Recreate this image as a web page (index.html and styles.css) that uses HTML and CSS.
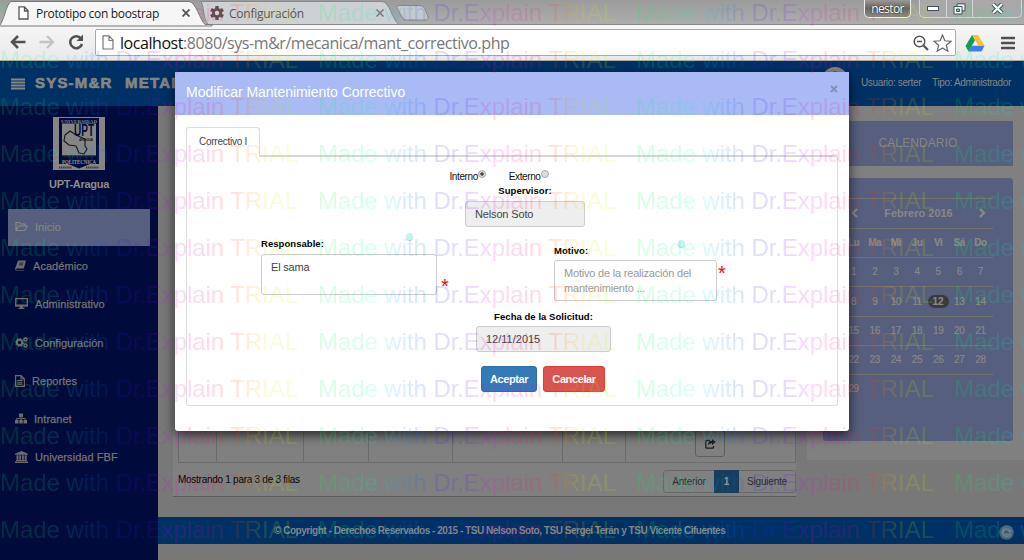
FILE: index.html
```html
<!DOCTYPE html>
<html lang="es">
<head>
<meta charset="utf-8">
<title>Prototipo con boostrap</title>
<link rel="stylesheet" href="styles.css">
</head>
<body>
<div class="screen">
  <header class="chrome">
    <div class="tabstrip">
      <div class="tab tab-active">
        <svg class="tab-shape" width="212" height="26"><path d="M-1 26C4 22 6 4 11 1.500H189C196 2 200 20 205 24.500H212V26Z" fill="#f6f6f6" stroke="#777"/></svg>
        <svg class="tab-icon" width="11" height="14"><path d="M1 .8h5.500L10 4.500V13H1zM6.500 1v4H10" fill="#fff" stroke="#555" stroke-width="1.300"/></svg>
        <span class="tab-title t1">Prototipo con boostrap</span>
        <svg class="tab-close" width="8" height="8"><path d="M.5.5l7 7M7.500.5l-7 7" stroke="#555" stroke-width="1.800"/></svg>
      </div>
      <div class="tab tab-back">
        <svg class="tab-shape" width="200" height="25"><path d="M0 1.500H181C189 2 191 20 198 24.500H7C2 18 3 5 0 1.500Z" fill="#cdd0d4" stroke="#888"/></svg>
        <svg class="tab-icon" width="14" height="14" viewBox="-7 -7 14 14"><g fill="#5a5252"><circle r="5"/><path d="M-1.700-7h3.400v14h-3.400z"/><path d="M-1.700-7h3.400v14h-3.400z" transform="rotate(60)"/><path d="M-1.700-7h3.400v14h-3.400z" transform="rotate(120)"/></g><circle r="2.200" fill="#d4d4d6"/></svg>
        <span class="tab-title t2">Configuración</span>
        <svg class="tab-close" width="8" height="8"><path d="M.5.5l7 7M7.500.5l-7 7" stroke="#777" stroke-width="1.500"/></svg>
      </div>
      <svg class="tab-new" width="34" height="16"><path d="M3 .5H23Q28 .5 29 4L32 12Q33 15 29 15H10Q7 15 6 12L1 3Q0 .5 3 .5Z" fill="#c5c7cb" stroke="#888"/></svg>
      <div class="win">
        <span class="win-user">nestor</span>
        <span class="win-buttons">
          <i><svg width="12" height="6"><rect x=".5" y=".5" width="11" height="4" fill="#fff" stroke="#444b60"/></svg></i>
          <i><svg width="13" height="12"><path d="M4 .8h8v7H4z" fill="#eee" stroke="#444b60"/><path d="M1 3.500h8v7.500H1z" fill="#fff" stroke="#444b60"/><path d="M3.500 6h3v2.500h-3z" fill="#aaa" stroke="#444b60"/></svg></i>
          <i class="wide"><svg width="13" height="11"><path d="M2 1l9 9M11 1L2 10" stroke="#444b60" stroke-width="4.200"/><path d="M2 1l9 9M11 1L2 10" stroke="#fff" stroke-width="2.200"/></svg></i>
        </span>
      </div>
    </div>
    <div class="toolbar">
      <svg class="nav" width="16" height="14"><path d="M8 1L2 7l6 6M2 7h13.500" fill="none" stroke="#505050" stroke-width="2.500"/></svg>
      <svg class="nav nav2" width="16" height="14"><path d="M8 1l6 6-6 6M14 7H.5" fill="none" stroke="#c4c4c4" stroke-width="2.300"/></svg>
      <svg class="nav nav3" width="16" height="16"><path d="M13 4.500A6 6 0 1 0 14 10" fill="none" stroke="#505050" stroke-width="2.500"/><path d="M15 .5V7H8.500z" fill="#505050"/></svg>
      <div class="omni">
        <svg width="12" height="15"><path d="M1 .8h6L11 5v9H1zM7 1v4.500h4" fill="#fff" stroke="#777" stroke-width="1.200"/></svg>
        <span class="url"><b>localhost</b>:8080/sys-m&amp;r/mecanica/mant_correctivo.php</span>
        <svg width="16" height="16"><circle cx="6.500" cy="6.500" r="5.300" fill="none" stroke="#555" stroke-width="1.500"/><path d="M4 6.500h5" stroke="#555" stroke-width="1.500"/><path d="M10.500 10.500L15 15" stroke="#555" stroke-width="2.300"/></svg>
        <svg class="star" width="19" height="18"><path d="M9.500 1l2.400 5.800 6.100.4-4.700 4 1.500 6L9.500 14l-5.300 3.200 1.500-6-4.700-4 6.100-.4z" fill="#fff" stroke="#666" stroke-width="1.200"/></svg>
      </div>
      <svg class="drive" width="20" height="18"><path d="M7 1h6l6.500 10.500h-6z" fill="#fbc02e"/><path d="M7 1l3 5.300L3.500 17.500 .5 12z" fill="#149c56"/><path d="M6.700 11.700h12.800L16.500 17.500H3.500z" fill="#3f7ee8"/></svg>
      <svg class="menu" width="14" height="14"><path d="M1 2h12M1 7h12M1 12h12" stroke="#505050" stroke-width="2.600" stroke-linecap="round"/></svg>
    </div>
  </header>

  <div class="app">
    <div class="topbar">
      <svg width="14" height="12"><path d="M0 1.500h14M0 4.500h14M0 7.500h14M0 10.500h14" stroke="#858585" stroke-width="2"/></svg>
      <span class="brand">SYS-M&amp;R</span><span class="brand b2">METAL</span>
      <svg class="avatar" width="26" height="26"><circle cx="13" cy="13" r="13" fill="#888"/><circle cx="13" cy="8" r="3.500" fill="#393939"/></svg>
      <span class="who">Usuario: serter</span><span class="role">Tipo: Administrador</span>
    </div>
    <div class="body">
      <nav class="side">
        <svg class="logo" width="52" height="53"><rect width="52" height="53" fill="#858585"/><path d="M6 1h40v46H37l-11 4.500L15 47H6z" fill="#000b3c"/><path d="M9 6.500h34v32H9z" fill="#858585"/>
          <text x="8" y="5.500" textLength="36" font-size="5" font-weight="bold" font-family="Liberation Serif, serif" fill="#858585">UNIVERSIDAD</text>
          <path d="M12 18l5-4 6 4 9 4v7l2 3-3 5-5-1-3-7-7-1-5-4z" fill="none" stroke="#151515" stroke-width="1.100"/>
          <text x="21" y="19" textLength="20" lengthAdjust="spacingAndGlyphs" font-size="16" font-weight="bold" font-family="Liberation Sans, sans-serif" fill="#000b3c">UPT</text>
          <text x="26" y="24" textLength="14" font-size="3.500" font-weight="bold" font-family="Liberation Sans, sans-serif" fill="#151515">ARAGUA</text>
          <path d="M10 39.500h32" stroke="#202020" stroke-width="2" stroke-dasharray="2 .7"/>
          <text x="9" y="46.500" textLength="34" lengthAdjust="spacingAndGlyphs" font-size="6.500" font-weight="bold" font-family="Liberation Serif, serif" fill="#999">POLITECNICA</text>
          <path d="M6 50.500h13M33 50.500h13" stroke="#333" stroke-width="1.800" stroke-dasharray="1.300 .8"/></svg>
        <strong class="org">UPT-Aragua</strong>
        <a class="item on"><svg width="13" height="11"><path d="M1 9V1.500h3.500L5.500 3H10v2M1 9.500L3.500 5h8.700L9.800 9.500z" fill="none" stroke="#888" stroke-width="1.200"/></svg><span>Inicio</span></a>
        <a class="item i2"><svg width="11" height="11"><path d="M3 .5h8L8.800 8.500H1.500Q.8 10 2 10H9L11 3v-.5L9 10.500H1.500Q-.3 10 .3 8z" fill="#6c6c6c"/><path d="M4.500 3h4M4 4.800h4" stroke="#000b3c" stroke-width=".7"/></svg><span>Académico</span></a>
        <a class="item i3"><svg width="13" height="11"><path d="M.7.700h11.600v7H.7z" fill="none" stroke="#6c6c6c" stroke-width="1.300"/><path d="M0 6.500h13v2H0zM5 8h3v2H5zM3.500 9.800h6V11h-6z" fill="#6c6c6c"/></svg><span>Administrativo</span></a>
        <a class="item i4"><svg width="13" height="11"><g fill="none" stroke="#6c6c6c"><circle cx="4.500" cy="5.500" r="2.700" stroke-width="1.900"/><circle cx="4.500" cy="5.500" r="4" stroke-width="1" stroke-dasharray="1.600 1.500"/><circle cx="10.500" cy="2.500" r="1.500" stroke-width="1.500"/><circle cx="10.500" cy="8.500" r="1.500" stroke-width="1.500"/></g></svg><span>Configuración</span></a>
        <a class="item i5"><svg width="10" height="12"><path d="M.6.600h5.400L9.400 4v7.400H.6zM6 .6V4h3.400M2.500 5.500h5M2.500 7.300h5M2.500 9.100h5" fill="none" stroke="#6c6c6c" stroke-width="1.100"/></svg><span>Reportes</span></a>
        <a class="item i6"><svg width="12" height="11"><path d="M4 .5h4v3.500H4zM0 7h3.500v3.500H0zM4.300 7h3.500v3.500H4.300zM8.500 7H12v3.500H8.500z" fill="#6c6c6c"/><path d="M6 4v3M1.700 7V5.500h8.500V7" fill="none" stroke="#6c6c6c"/></svg><span>Intranet</span></a>
        <a class="item i7"><svg width="13" height="12"><path d="M6.500 0L13 2.800v1H0v-1zM1.500 4.300h2v4.500h-2zM4.300 4.300h1.800v4.500H4.300zM7 4.300h1.800v4.500H7zM9.700 4.300h2v4.500h-2zM1 9h11v1H1zM0 10.500h13V12H0z" fill="#6c6c6c"/></svg><span>Universidad FBF</span></a>
      </nav>
      <div class="main">
        <div class="columns">
          <section class="panel">
            <div class="cells"><i class="c1"></i><i class="c2"></i><i class="c3"></i><i class="c4"></i><i class="c5"></i><i class="c6"></i>
              <i class="c7"><span class="edit"><svg width="11" height="10"><path d="M5 1.500H1.500Q.8 1.500.8 2.500V8.300Q.8 9.200 1.800 9.200H7.500Q8.500 9.200 8.500 8.200V7" fill="none" stroke="#1d1d1d" stroke-width="1.300"/><path d="M7 0l4 3-4 3V4.200Q4 4 3.500 7 2 2.300 7 1.800z" fill="#1d1d1d"/></svg></span></i></div>
            <div class="pager"><span class="count">Mostrando 1 para 3 de 3 filas</span><span class="pages"><b class="p1">Anterior</b><b class="cur">1</b><b class="p3">Siguiente</b></span></div>
          </section>
          <aside class="aside">
            <h2 class="cal-title">CALENDARIO</h2>
            <div class="cal">
              <div class="month"><svg width="7" height="10"><path d="M6 1L2 5l4 4" fill="none" stroke="#888" stroke-width="2.300"/></svg><b>Febrero 2016</b><svg width="7" height="10"><path d="M1 1l4 4-4 4" fill="none" stroke="#888" stroke-width="2.300"/></svg></div>
              <div class="week"><b>Lu</b><b>Ma</b><b>Mi</b><b>Ju</b><b>Vi</b><b>Sá</b><b>Do</b></div>
              <div class="week"><span>1</span><span>2</span><span>3</span><span>4</span><span>5</span><span>6</span><span>7</span></div>
              <div class="week tall"><span>8</span><span>9</span><span>10</span><span>11</span><b class="today">12</b><span>13</span><span>14</span></div>
              <div class="week"><span>15</span><span>16</span><span>17</span><span>18</span><span>19</span><span>20</span><span>21</span></div>
              <div class="week"><span>22</span><span>23</span><span>24</span><span>25</span><span>26</span><span>27</span><span>28</span></div>
              <div class="week"><span>29</span></div>
            </div>
          </aside>
        </div>
        <footer class="foot"><span>© Copyright - Derechos Reservados - 2015 - TSU Nelson Soto, TSU Sergei Terán y TSU Vicente Cifuentes</span>
          <svg class="up" width="15" height="15"><circle cx="7.500" cy="7.500" r="7.300" fill="#4d5d73"/><circle cx="7.500" cy="7.500" r="5" fill="#68748a"/><path d="M5.500 8l2-2 2 2" fill="none" stroke="#333c49" stroke-width="1.200"/></svg></footer>
      </div>
    </div>
  </div>

  <div class="modal">
    <div class="modal-head"><span>Modificar Mantenimiento Correctivo</span><svg width="8" height="8"><path d="M1 1l6 6M7 1L1 7" stroke="#8290bb" stroke-width="1.900"/></svg></div>
    <div class="modal-body">
      <div class="mtab"><span>Correctivo I</span></div>
      <div class="form">
        <div class="radios"><span>Interno</span><i class="radio sel"></i><span class="ext">Externo</span><i class="radio"></i></div>
        <label class="lab">Supervisor:</label>
        <div class="field sup">Nelson Soto</div>
        <div class="pair">
          <div class="resp"><label class="lab">Responsable:</label><div class="area-row"><div class="area a1">El sama</div><em>*</em></div></div>
          <div class="motivo"><label class="lab">Motivo:</label><div class="area-row"><div class="area a2">Motivo de la realización del mantenimiento ...</div><em>*</em></div></div>
        </div>
        <label class="lab fecha">Fecha de la Solicitud:</label>
        <div class="field date">12/11/2015</div>
        <div class="btns"><button class="btn ok">Aceptar</button><button class="btn no">Cancelar</button></div>
      </div>
    </div>
    <i class="dot d1"></i><i class="dot d2"></i>
  </div>

  <svg class="mark" width="1024" height="560">
    <defs>
      <linearGradient id="rainbow" gradientUnits="userSpaceOnUse" x1="0" x2="318" y1="0" y2="0">
        <stop offset="0" stop-color="#00ff46"/><stop offset=".1" stop-color="#00ff70"/><stop offset=".19" stop-color="#00fff0"/><stop offset=".29" stop-color="#0080ff"/><stop offset=".38" stop-color="#2020ff"/><stop offset=".47" stop-color="#7000ff"/><stop offset=".55" stop-color="#f000f0"/><stop offset=".66" stop-color="#ff0070"/><stop offset=".74" stop-color="#ff3000"/><stop offset=".82" stop-color="#ffd000"/><stop offset=".9" stop-color="#c0ff00"/><stop offset="1" stop-color="#40ff00"/>
      </linearGradient>
      <pattern id="tile" patternUnits="userSpaceOnUse" width="318" height="47"><text class="mark-text" x="0" y="21" textLength="298" fill="url(#rainbow)">Made with Dr.Explain TRIAL</text></pattern>
    </defs>
    <rect width="1024" height="560" fill="url(#tile)"/>
  </svg>
</div>
</body>
</html>
```
FILE: styles.css
```css
* { box-sizing: border-box; }
body { margin: 0; font-family: "Liberation Sans", Arial, sans-serif; }
svg { display: block; flex: none; }
i { font-style: normal; }
.screen { position: relative; width: 1024px; height: 560px; overflow: hidden; background: #787878; }
.mark { position: absolute; left: 0; top: 0; opacity: .14; }
.mark-text { font: 24px "Liberation Sans", Arial, sans-serif; }

.chrome { height: 61px; border-bottom: 1px solid #aaa; font-family: "Open Sans", "Noto Sans", sans-serif; }
.tabstrip { height: 25px; display: flex; background: linear-gradient(#9b9b9b, #adadad); border-bottom: 1px solid #888; }
.tab { position: relative; display: flex; align-items: center; height: 25px; font-size: 12px; white-space: nowrap; }
.tab-shape { position: absolute; left: 0; top: 0; overflow: visible; }
.tab-icon, .tab-title, .tab-close { position: relative; }
.tab-active { width: 201px; padding: 1px 0 0 18px; z-index: 1; }
.tab-back { width: 196px; padding: 1px 0 0 9px; color: #555; }
.tab-title { width: 146px; color: #222; }
.t1 { margin-left: 7px; letter-spacing: -.32px; }
.t2 { margin-left: 5px; width: 147px; color: #555; letter-spacing: -.25px; }
.tab-new { margin: 5px 0 0 -1px; }
.win { margin-left: auto; display: flex; gap: 8px; font-size: 12px; }
.win-user { width: 47px; height: 18px; border: 1px solid #eee; border-top: 0; border-radius: 0 0 5px 5px; background: linear-gradient(#999, #666 50%, #8a8a8a); color: #fff; text-align: center; line-height: 17px; text-shadow: 0 0 2px #000; letter-spacing: -.6px; }
.win-buttons { display: flex; width: 103px; height: 18px; border: 1px solid #d5d5d5; border-top: 0; border-radius: 0 0 5px 5px; margin-right: 2px; background: #a8a8a8; }
.win-buttons i { width: 27px; display: flex; align-items: center; justify-content: center; border-right: 1px solid #d5d5d5; }
.win-buttons i.wide { width: 48px; border: 0; }
.toolbar { height: 35px; display: flex; align-items: center; padding: 0 9px 0 10px; background: linear-gradient(#f6f6f6, #e9e9e9); }
.nav { margin-top: -1px; }
.nav2 { margin-left: 13px; }
.nav3 { margin-left: 13px; }
.omni { width: 863px; height: 27px; margin-left: 11px; padding: 0 3px 0 6px; display: flex; align-items: center; background: #fff; border: 1px solid #aaa; border-radius: 2px; }
.url { flex: 1; margin-left: 6px; color: #777; font-size: 16px; line-height: 24px; white-space: nowrap; letter-spacing: -.44px; }
.url b { font-weight: normal; color: #111; }
.star { margin-left: 4px; }
.drive { margin-left: 9px; }
.menu { margin-left: 16px; }

.app { height: 499px; }
.topbar { height: 45px; background: #003164; display: flex; align-items: center; padding-left: 11px; color: #858585; white-space: nowrap; }
.brand { width: 90px; margin: -3px 0 0 10px; font-weight: bold; font-size: 15px; letter-spacing: 1.2px; -webkit-text-stroke: .7px #858585; }
.b2 { margin-left: 0; }
.avatar { margin: -8px 0 0 607px; }
.who, .role { font-size: 10px; letter-spacing: -.36px; margin-top: -3px; width: 71px; }
.who { margin-left: 13px; }
.role { width: 90px; }
.body { display: flex; height: 454px; }
.side { width: 158px; background: #000a3b; display: flex; flex-direction: column; padding: 11px 8px 0; }
.logo { margin-left: 45px; }
.org { margin-top: 8px; height: 12px; line-height: 12px; text-align: center; font-size: 11px; color: #8c8c8c; letter-spacing: -.3px; }
.item { display: flex; align-items: center; width: 142px; height: 37px; margin-top: 1px; padding-left: 7px; font-size: 11px; color: #747474; -webkit-text-stroke: .25px #747474; white-space: nowrap; }
.item span { margin-left: 7px; letter-spacing: .05px; }
.item.on { margin-top: 19px; padding-bottom: 2px; background: #565f7e; color: #8c8c8c; }
.item.i2 { margin-top: 1px; }
.item.i3 { margin-top: 1px; }
.item.i4 { margin-top: 2px; }
.i5 span { position: static; }
.main { flex: 1; display: flex; flex-direction: column; }
.columns { display: flex; height: 392px; padding-left: 15px; gap: 11px; align-items: flex-start; }
.panel { width: 623px; height: 391px; background: #808080; display: flex; flex-direction: column; justify-content: flex-end; border-bottom: 1px solid #5c5c5c; padding-left: 5px; }
.cells { display: flex; height: 58px; border: 1px solid #6b6b6b; border-right: 0; }
.cells i { border-right: 1px solid #6b6b6b; }
.c1 { width: 38px; } .c2 { width: 87px; } .c3 { width: 65px; } .c4 { width: 84px; } .c5 { width: 110px; } .c6 { width: 63px; }
.c7 { flex: 1; display: flex; justify-content: center; padding: 24px 1px 0 0; }
.edit { width: 30px; height: 27px; border: 1px solid #606060; border-radius: 3px; display: flex; align-items: center; justify-content: center; }
.pager { height: 33px; display: flex; justify-content: space-between; font-size: 10px; color: #050505; }
.count { margin-top: 11px; letter-spacing: -.27px; }
.pages { display: flex; margin: 7px 0 0 0; height: 23px; border: 1px solid #696969; border-radius: 3px; color: #2d2d2d; line-height: 21px; text-align: center; }
.pages b { font-weight: normal; letter-spacing: -.2px; }
.p1 { width: 50px; } .p3 { width: 56px; }
.pages .cur { width: 25px; height: 23px; margin: -1px 0; line-height: 23px; background: #193d5c; color: #999; font-weight: bold; }
.aside { width: 217px; height: 354px; background: #808080; padding: 15px 11px 0 16px; }
.cal-title { margin: 0 0 12px; height: 45px; line-height: 44px; background: #565f7e; color: #858585; font-size: 12px; font-weight: normal; text-align: center; letter-spacing: .1px; }
.cal { height: 263px; padding: 20px 20px 0; background: #565f7e; border-radius: 3px; color: #888; font-size: 10px; }
.month { height: 30px; border-top: 1px solid #74746f; display: flex; align-items: center; justify-content: space-between; padding: 0 7px 2px 8px; font-size: 11px; }
.week { height: 29px; border-top: 1px solid #74746f; display: grid; grid-template-columns: repeat(7, 1fr); align-items: center; text-align: center; padding: 0 2px 1px 0; letter-spacing: -.4px; -webkit-text-stroke: .2px #888; }
.tall { height: 30px; }
.today { background: #3a3a3a; border-radius: 7px; height: 13px; line-height: 13px; font-size: 10px; letter-spacing: 0; }
.foot { margin-top: 19px; height: 27px; background: #003164; color: #858585; display: flex; align-items: center; padding-left: 116px; font-size: 10px; font-weight: bold; white-space: nowrap; letter-spacing: -.47px; }
.up { margin: 4px 10px 0 auto; }

.modal { position: absolute; left: 175px; top: 72px; width: 674px; height: 359px; background: #fff; box-shadow: 0 4px 12px rgba(0,0,0,.7); border-radius: 0 0 3px 3px; }
.modal-head { height: 43px; background: #a9baf5; display: flex; align-items: center; justify-content: space-between; padding: 0 11px; color: #fff; font-size: 14px; }
.modal-head span { margin-top: -3px; letter-spacing: -.03px; }
.modal-head svg { margin-top: -9px; }
.modal-body { padding: 12px 11px 0; font-size: 10px; }
.mtab { position: relative; width: 74px; height: 30px; border: 1px solid #ddd; border-bottom: 0; border-radius: 3px 3px 0 0; background: #fff; text-align: center; line-height: 28px; color: #444; margin-bottom: -2px; letter-spacing: -.25px; }
.form { width: 652px; height: 251px; border: 1px solid #ddd; border-top: 2px solid #d7d7d7; border-radius: 3px; display: flex; flex-direction: column; align-items: center; padding-right: 0; }
.radios { display: flex; height: 12px; line-height: 14px; margin: 13px 26px 0 0; letter-spacing: -.4px; color: #111; }
.radio { width: 8px; height: 8px; border: 1px solid #aaa; border-radius: 50%; background: #ddd; }
.sel { background: radial-gradient(#444 30%, #ddd 50%); }
.ext { margin-left: 23px; }
.lab { display: block; height: 12px; line-height: 12px; font-size: 9.500px; font-weight: bold; color: #000; letter-spacing: .05px; white-space: nowrap; }
.form > .lab { margin: 3px 0 0 26px; }
.field { height: 26px; background: #eee; border: 1px solid #ccc; border-radius: 3px; padding-left: 9px; font-size: 11px; line-height: 24px; color: #444; letter-spacing: -.15px; }
.sup { width: 120px; margin: 4px 0 0 26px; }
.pair { align-self: stretch; display: flex; height: 83px; padding-left: 74px; }
.resp { width: 293px; padding-top: 11px; }
.motivo { padding-top: 18px; }
.area-row { display: flex; margin-top: 4px; }
.motivo .area-row { margin-top: 3px; }
.area { height: 41px; border: 1px solid #ccc; border-radius: 3px; padding: 5px 9px; font-size: 11px; line-height: 15px; color: #444; letter-spacing: -.2px; }
.a1 { width: 176px; }
.a2 { width: 163px; color: #999; padding-right: 0; }
.area-row em { font-style: normal; color: #f00; font-size: 20px; line-height: 20px; margin-left: 1px; }
.resp em { margin: 22px 0 0 4px; }
.motivo em { margin-top: 3px; }
.form > .fecha { margin: 1px 0 0 63px; }
.date { width: 135px; margin: 3px 0 0 63px; letter-spacing: 0; }
.btns { display: flex; gap: 6px; margin: 14px 0 0 62px; }
.btn { height: 26px; border: 1px solid #2e6da4; border-radius: 3px; background: #337ab7; color: #fff; font: bold 11px "Liberation Sans", Arial, sans-serif; letter-spacing: -.4px; padding: 0; width: 56px; }
.no { width: 62px; background: #d9534f; border-color: #d43f3a; }
.dot { position: absolute; width: 7px; height: 7px; border-radius: 50%; background: #c5f3f0; box-shadow: 0 1px 1px #ccc; }
.d1 { left: 231px; top: 161px; }
.d2 { left: 503px; top: 168px; }
```
